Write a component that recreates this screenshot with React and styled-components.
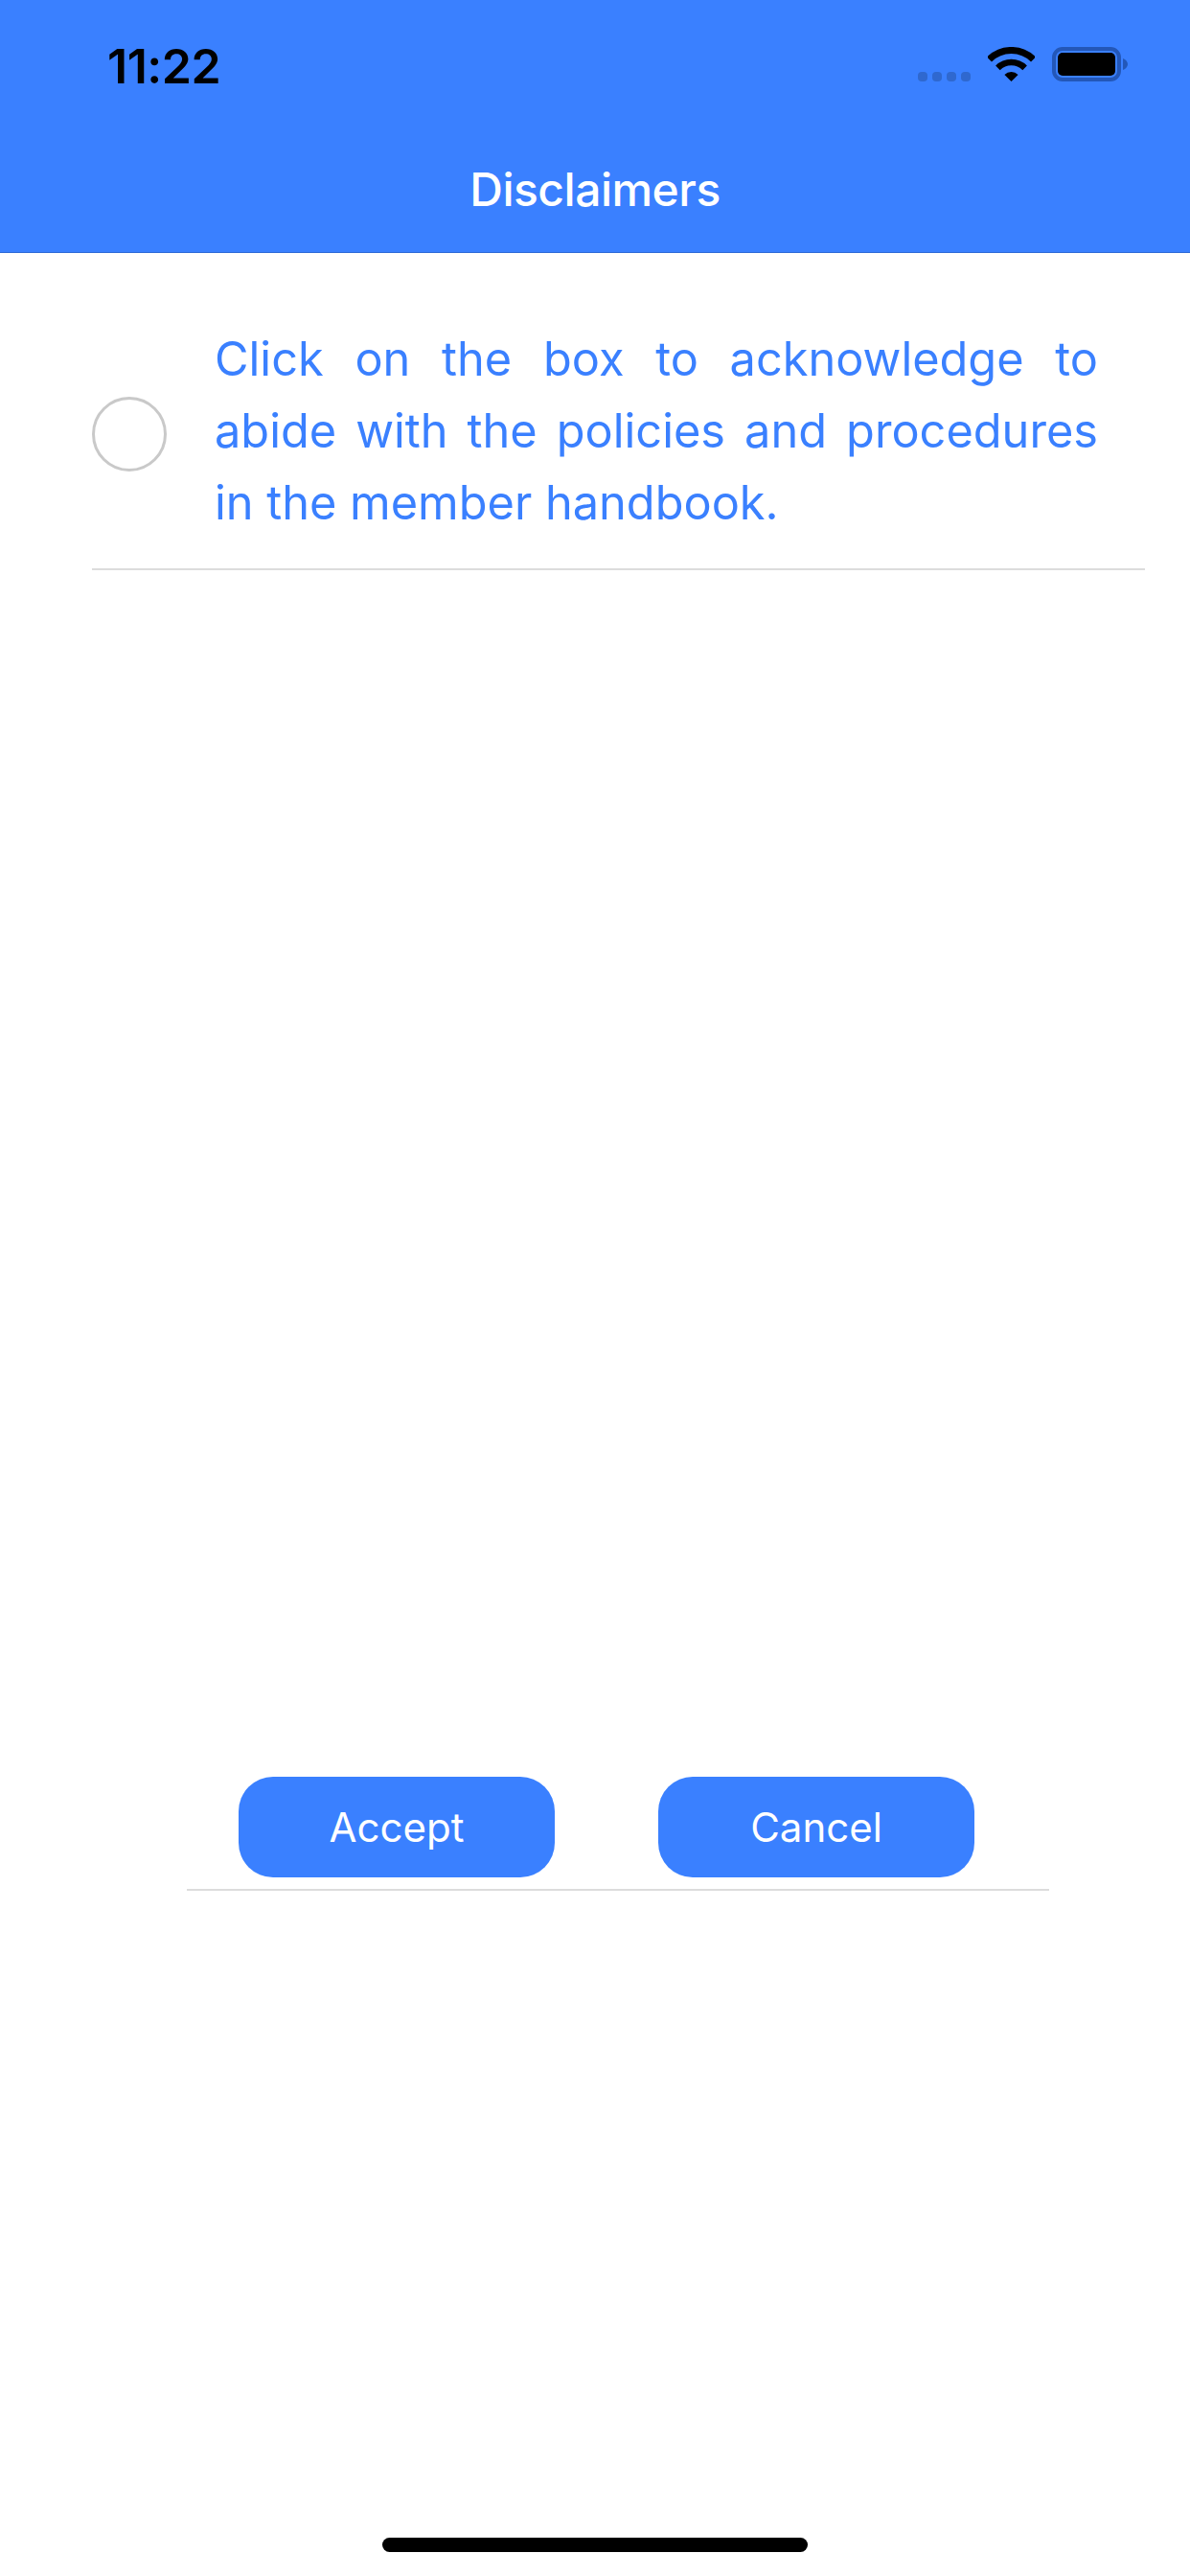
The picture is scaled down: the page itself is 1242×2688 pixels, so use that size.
import styled, { createGlobalStyle } from 'styled-components';

const GlobalStyle = createGlobalStyle`
    html, body {
        margin: 0;
        padding: 0;
        background: #ffffff;
    }
    * {
        box-sizing: border-box;
    }
`

export default function App() {
    return (
        <>
            <GlobalStyle />
            <Page>
                <Header>
                    <StatusBar>
                        <Time>11:22</Time>
                        <StatusIcons>
                            <Signal>
                                <SignalDot />
                                <SignalDot />
                                <SignalDot />
                                <SignalDot />
                            </Signal>
                            <WifiIcon />
                            <BatteryIcon />
                        </StatusIcons>
                    </StatusBar>
                    <Title>Disclaimers</Title>
                </Header>

                <DisclaimerRow>
                    <RadioCircle />
                    <DisclaimerText>
                        Click on the box to acknowledge to abide with the policies and procedures in the member handbook.
                    </DisclaimerText>
                </DisclaimerRow>

                <ButtonRow>
                    <ActionButton>Accept</ActionButton>
                    <ActionButton>Cancel</ActionButton>
                </ButtonRow>

                <HomeIndicator />
            </Page>
        </>
    )
}

function WifiIcon() {
    return (
        <svg width="49" height="36" viewBox="0 0 49 36">
            <path d="M1.5 13 A32.5 32.5 0 0 1 47.5 13" fill="none" stroke="#000" strokeWidth="7" />
            <path d="M10.4 21.9 A20 20 0 0 1 38.6 21.9" fill="none" stroke="#000" strokeWidth="6.5" />
            <path d="M24.5 36 L17.4 28.9 A10 10 0 0 1 31.6 28.9 Z" fill="#000" />
        </svg>
    )
}

function BatteryIcon() {
    return (
        <svg width="79" height="36" viewBox="0 0 79 36">
            <rect x="2" y="2" width="68" height="32" rx="9" fill="none" stroke="#2357b8" strokeWidth="4" />
            <rect x="6" y="6" width="60" height="24" rx="5" fill="#000" />
            <path d="M74 12 C77 13 79 15.500 79 18 C79 20.500 77 23 74 24 Z" fill="#2357b8" />
        </svg>
    )
}

const Page = styled.div`
    width: 1242px;
    height: 2688px;
    display: flex;
    flex-direction: column;
    background: #ffffff;
    font-family: Inter, "Liberation Sans", sans-serif;
    overflow: hidden;
`

const Header = styled.header`
    height: 264px;
    background: #3a80ff;
    border-bottom: 1px solid #2f6ad6;
    display: flex;
    flex-direction: column;
`

const StatusBar = styled.div`
    height: 168px;
    padding: 43px 65px 0 112px;
    display: flex;
    justify-content: space-between;
    align-items: flex-start;
`

const Time = styled.span`
    font-size: 50px;
    font-weight: 600;
    line-height: 52px;
    letter-spacing: -0.5px;
    color: #000000;
`

const StatusIcons = styled.div`
    display: flex;
    align-items: flex-end;
    margin-top: 6px;
    gap: 18px;
`

const Signal = styled.div`
    display: flex;
    gap: 5px;
`

const SignalDot = styled.span`
    width: 10px;
    height: 10px;
    border-radius: 4px;
    background: #2f68cf;
`

const Title = styled.h1`
    margin: 0;
    font-size: 48px;
    font-weight: 500;
    line-height: 60px;
    letter-spacing: -0.5px;
    text-align: center;
    color: #ffffff;
`

const DisclaimerRow = styled.section`
    margin: 0 47px 0 96px;
    height: 331px;
    padding: 41px 49px 0 0;
    border-bottom: 2px solid #dcdcdc;
    display: flex;
    align-items: center;
    gap: 50px;
`

const RadioCircle = styled.span`
    flex: none;
    width: 78px;
    height: 78px;
    margin-top: 7px;
    border-radius: 50%;
    border: 3.5px solid #c9c9c9;
`

const DisclaimerText = styled.p`
    margin: 0;
    flex: 1;
    font-size: 48.7px;
    font-weight: 400;
    line-height: 75px;
    text-align: justify;
    color: #3a80ff;
`

const ButtonRow = styled.div`
    margin: 1259px 0 0 195px;
    width: 900px;
    height: 119px;
    padding: 0 0 0 54px;
    border-bottom: 2px solid #dcdcdc;
    display: flex;
    align-items: flex-start;
    gap: 108px;
`

const ActionButton = styled.button`
    width: 330px;
    height: 105px;
    border: none;
    border-radius: 36px;
    background: #3a80ff;
    color: #ffffff;
    font-family: inherit;
    font-size: 42px;
    font-weight: 400;
    cursor: pointer;
`

const HomeIndicator = styled.div`
    align-self: center;
    margin-top: auto;
    margin-bottom: 25px;
    width: 444px;
    height: 15px;
    border-radius: 8px;
    background: #000000;
`
